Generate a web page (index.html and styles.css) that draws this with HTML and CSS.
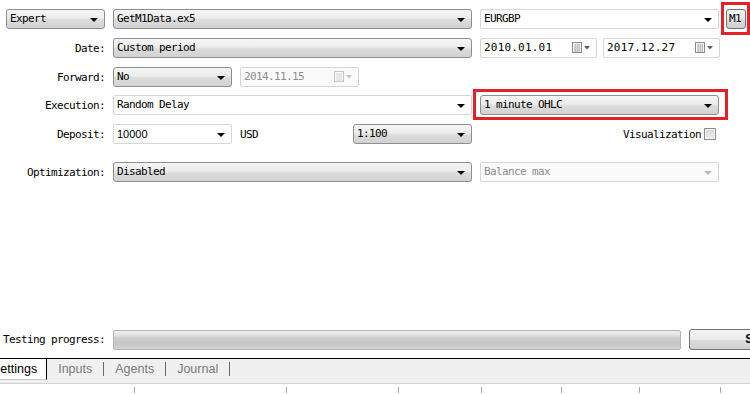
FILE: index.html
```html
<!DOCTYPE html>
<html lang="en">
<head>
    <meta charset="UTF-8">
    <title>Strategy Tester</title>
    <link rel="stylesheet" href="styles.css">
</head>
<body>
    <div class="page">
        <div class="form">
            <div class="row row-first">
                <div class="field select expert">Expert<i class="arrow"></i></div>
                <div class="field select wide">GetM1Data.ex5<i class="arrow"></i></div>
                <div class="field combo half">EURGBP<i class="arrow"></i></div>
                <div class="btn period">M1</div>
            </div>

            <div class="row">
                <div class="label">Date:</div>
                <div class="field select wide">Custom period<i class="arrow"></i></div>
                <div class="field combo date">2010.01.01<span class="cal"><svg width="18" height="11" viewBox="0 0 18 11"><rect x="0.5" y="0.5" width="9" height="10" fill="#f4f4f4" stroke="#8a8a8a"/><path d="M2 3h6M2 5h6M2 7h6M2 9h6M3.5 2v8M5.5 2v8M7.5 2v8" stroke="#b8b8b8" stroke-width="0.8"/><path d="M12 4h6l-3 3.5z" fill="#4d5f80"/></svg></span></div>
                <div class="field combo date date-to">2017.12.27<span class="cal"><svg width="18" height="11" viewBox="0 0 18 11"><rect x="0.5" y="0.5" width="9" height="10" fill="#f4f4f4" stroke="#8a8a8a"/><path d="M2 3h6M2 5h6M2 7h6M2 9h6M3.5 2v8M5.5 2v8M7.5 2v8" stroke="#b8b8b8" stroke-width="0.8"/><path d="M12 4h6l-3 3.5z" fill="#4d5f80"/></svg></span></div>
            </div>

            <div class="row">
                <div class="label">Forward:</div>
                <div class="field select small">No<i class="arrow"></i></div>
                <div class="field combo small disabled">2014.11.15<span class="cal"><svg width="18" height="11" viewBox="0 0 18 11"><rect x="0.5" y="0.5" width="9" height="10" fill="#f8f8f8" stroke="#c4c4c4"/><path d="M2 3h6M2 5h6M2 7h6M2 9h6M3.5 2v8M5.5 2v8M7.5 2v8" stroke="#dadada" stroke-width="0.8"/><path d="M12 4h6l-3 3.5z" fill="#c0c4cc"/></svg></span></div>
            </div>

            <div class="row row-exec">
                <div class="label">Execution:</div>
                <div class="field combo wide">Random Delay<i class="arrow"></i></div>
                <div class="field select half">1 minute OHLC<i class="arrow"></i></div>
            </div>

            <div class="row">
                <div class="label">Deposit:</div>
                <div class="field combo small sans">10000<i class="arrow"></i></div>
                <div class="currency">USD</div>
                <div class="field select small leverage">1:100<i class="arrow"></i></div>
                <div class="visual">Visualization<span class="check"></span></div>
            </div>

            <div class="row row-opt">
                <div class="label">Optimization:</div>
                <div class="field select wide">Disabled<i class="arrow"></i></div>
                <div class="field combo half disabled">Balance max<i class="arrow"></i></div>
            </div>
        </div>

        <div class="row progress-row">
            <div class="label">Testing progress:</div>
            <div class="progress"></div>
            <div class="btn start">Start</div>
        </div>

        <div class="tabs">
            <div class="tab active">Settings</div>
            <div class="tab">Inputs</div><span class="sep"></span>
            <div class="tab">Agents</div><span class="sep"></span>
            <div class="tab">Journal</div><span class="sep"></span>
        </div>

        <div class="cols">
            <div class="col" style="width:135px"></div>
            <div class="col" style="width:152px"></div>
            <div class="col" style="width:112px"></div>
            <div class="col" style="width:83px"></div>
            <div class="col" style="width:80px"></div>
            <div class="col" style="width:78px"></div>
            <div class="col" style="width:81px"></div>
        </div>

        <!-- annotation frames -->
        <div class="mark mark-period"></div>
        <div class="mark mark-model"></div>
    </div>
</body>
</html>
```

FILE: styles.css
```css
body {
    margin: 0;
    padding: 0;
    overflow: hidden;
    background-color: #fff;
}

.page {
    position: relative;
    width: 750px;
    height: 394px;
    overflow: hidden;
    font-family: "DejaVu Sans Mono", "Liberation Mono", monospace;
    font-size: 11px;
    letter-spacing: -0.62px;
    color: #000;
}

.row {
    display: flex;
    align-items: center;
    height: 20px;
    margin-top: 9px;
}

.row-exec {
    margin-top: 8px;
}

.row-opt {
    margin-top: 18px;
}

.label {
    flex: none;
    width: 105px;
    margin-right: 8px;
    text-align: right;
    white-space: nowrap;
}

.field {
    flex: none;
    position: relative;
    box-sizing: border-box;
    height: 20px;
    line-height: 18px;
    padding-left: 3px;
    margin-right: 8px;
    white-space: nowrap;
}

.select {
    border: 1px solid #8e8e8e;
    border-radius: 3px;
    background: linear-gradient(#f6f6f6, #ececec 45%, #dcdcdc 55%, #d2d2d2);
}

.combo {
    border: 1px solid #d6d6d6;
    border-radius: 2px;
    background-color: #fff;
}

.combo.disabled {
    color: #8c8c8c;
    background-color: #fafafa;
}

.combo.disabled .arrow {
    border-top-color: #b8b8b8;
}

.arrow {
    position: absolute;
    right: 6px;
    top: 8px;
    width: 0;
    height: 0;
    border-left: 4px solid transparent;
    border-right: 4px solid transparent;
    border-top: 4px solid #000;
}

.cal {
    position: absolute;
    right: 6px;
    top: 3px;
    line-height: 0;
}

.expert {
    width: 99px;
    margin-left: 6px;
}

.wide {
    width: 359px;
}

.half {
    width: 239px;
}

.small {
    width: 119px;
}

.date {
    width: 117px;
    margin-right: 6px;
    letter-spacing: 0.2px;
}

.sans {
    font-family: "Liberation Sans", Arial, sans-serif;
    font-size: 11px;
    letter-spacing: 0;
}

.currency {
    flex: none;
    width: 113px;
}

.leverage {
    margin-right: 0;
}

.visual {
    display: flex;
    align-items: center;
    margin-left: 151px;
    white-space: nowrap;
}

.check {
    flex: none;
    box-sizing: border-box;
    width: 12px;
    height: 12px;
    margin-left: 3px;
    border: 1px solid #8e8e8e;
    background: linear-gradient(#d8d8d8, #eeeeee);
    box-shadow: inset 0 0 0 1px #f4f4f4;
}

.btn {
    flex: none;
    box-sizing: border-box;
    height: 20px;
    line-height: 18px;
    border: 1px solid #707070;
    border-radius: 3px;
    background: linear-gradient(#f4f4f4, #ebebeb 50%, #dddddd 51%, #d0d0d0);
    text-align: center;
}

.period {
    width: 20px;
    margin-left: -1px;
    text-align: left;
    padding-left: 2px;
}

.progress-row {
    margin-top: 147px;
    height: 21px;
}

.progress {
    flex: none;
    box-sizing: border-box;
    width: 568px;
    height: 20px;
    margin-right: 8px;
    border: 1px solid #b4b4b4;
    border-radius: 2px;
    background: linear-gradient(#f0f0f0, #e4e4e4 20%, #cdcdcd 40%, #c6c6c6 75%, #d8d8d8);
}

.start {
    width: 140px;
    height: 21px;
    font-family: "Liberation Sans", Arial, sans-serif;
    font-size: 12px;
    font-weight: bold;
    letter-spacing: 0;
    line-height: 19px;
}

.tabs {
    display: flex;
    align-items: flex-start;
    height: 24px;
    margin-top: 8px;
    border-top: 1px solid #000;
    border-bottom: 1px solid #d2d2d2;
    background-color: #f0f0f0;
    font-family: "Liberation Sans", Arial, sans-serif;
    font-size: 12.5px;
    letter-spacing: 0;
}

.tab {
    flex: none;
    height: 20px;
    line-height: 20px;
    padding: 0 11px;
    color: #7a7a7a;
}

.tab.active {
    margin-left: -8px;
    padding: 0 9px 0 0;
    background-color: #fff;
    border-right: 1px solid #000;
    border-bottom: 1px solid #c8c8c8;
    color: #000;
}

.sep {
    flex: none;
    width: 1px;
    height: 14px;
    margin-top: 3px;
    background-color: #6a6a6a;
}

.cols {
    display: flex;
    height: 9px;
    margin-top: 1px;
    background-color: #fff;
}

.col {
    flex: none;
    box-sizing: border-box;
    height: 6px;
    margin-top: 2px;
    border-right: 1px solid #a8a8a8;
}

.mark {
    position: absolute;
    box-sizing: border-box;
    border: 3px solid #e3212b;
}

.mark-period {
    left: 721px;
    top: 2px;
    width: 29px;
    height: 33px;
}

.mark-model {
    left: 473px;
    top: 89px;
    width: 255px;
    height: 31px;
}
```
